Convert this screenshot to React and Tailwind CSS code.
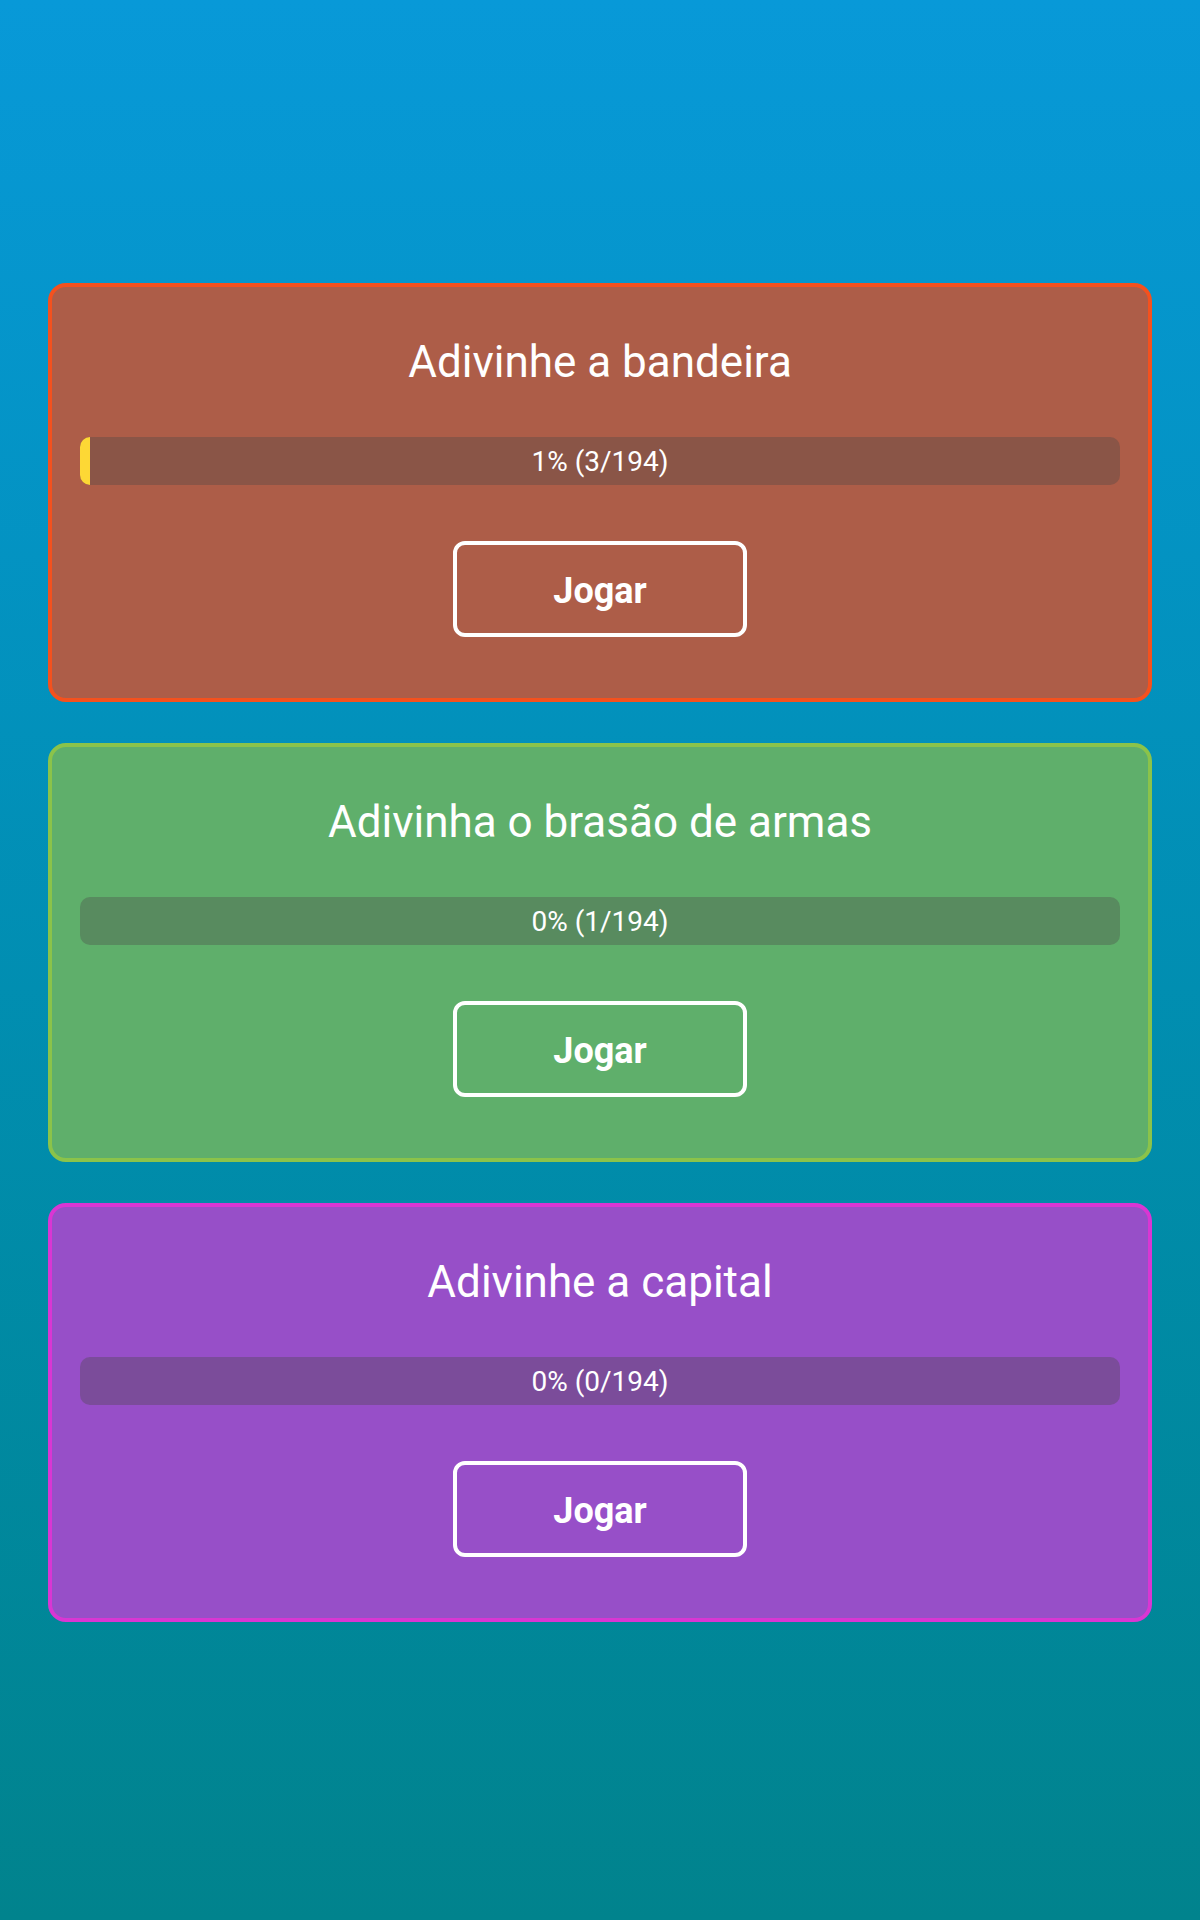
import React from 'react'

const games = [
  {
    title: 'Adivinhe a bandeira',
    pct: 1,
    done: 3,
    card: 'bg-[#ad5d48] border-[#f4511e]',
    bar: 'bg-[#8a5547]',
  },
  {
    title: 'Adivinha o brasão de armas',
    pct: 0,
    done: 1,
    card: 'bg-[#5faf6b] border-[#8bc34a]',
    bar: 'bg-[#588b5f]',
  },
  {
    title: 'Adivinhe a capital',
    pct: 0,
    done: 0,
    card: 'bg-[#974fc8] border-[#d936d3]',
    bar: 'bg-[#7b4c9a]',
  },
]

const total = 194

function GameCard({ game }) {
  return (
    <div className={`border-4 rounded-[18px] px-[28px] pt-[50px] pb-[61px] flex flex-col items-center ${game.card}`}>
      <h2 className="text-[44px] leading-[50px] text-white font-normal">{game.title}</h2>

      {/* progress */}
      <div className={`relative w-full h-[48px] mt-[50px] rounded-[10px] overflow-hidden ${game.bar}`}>
        <div className="absolute left-0 top-0 h-full bg-[#fdd835]" style={{ width: game.pct + '%' }} />
        <div className="relative h-full flex items-center justify-center pt-[2px] text-white text-[28px]">
          {game.pct}% ({game.done}/{total})
        </div>
      </div>

      <button className="mt-[56px] w-[294px] h-[96px] border-4 border-white rounded-[12px] pt-[3px] text-white text-[36px] font-bold">
        Jogar
      </button>
    </div>
  )
}

export default function App() {
  return (
    <div
      className="min-h-[1920px] bg-gradient-to-b from-[#0899d8] to-[#01838d] px-[48px] pt-[283px] flex flex-col gap-[41px]"
      style={{ fontFamily: 'Roboto, "Noto Sans", sans-serif' }}
    >
      {games.map((g) => (
        <GameCard key={g.title} game={g} />
      ))}
    </div>
  )
}
